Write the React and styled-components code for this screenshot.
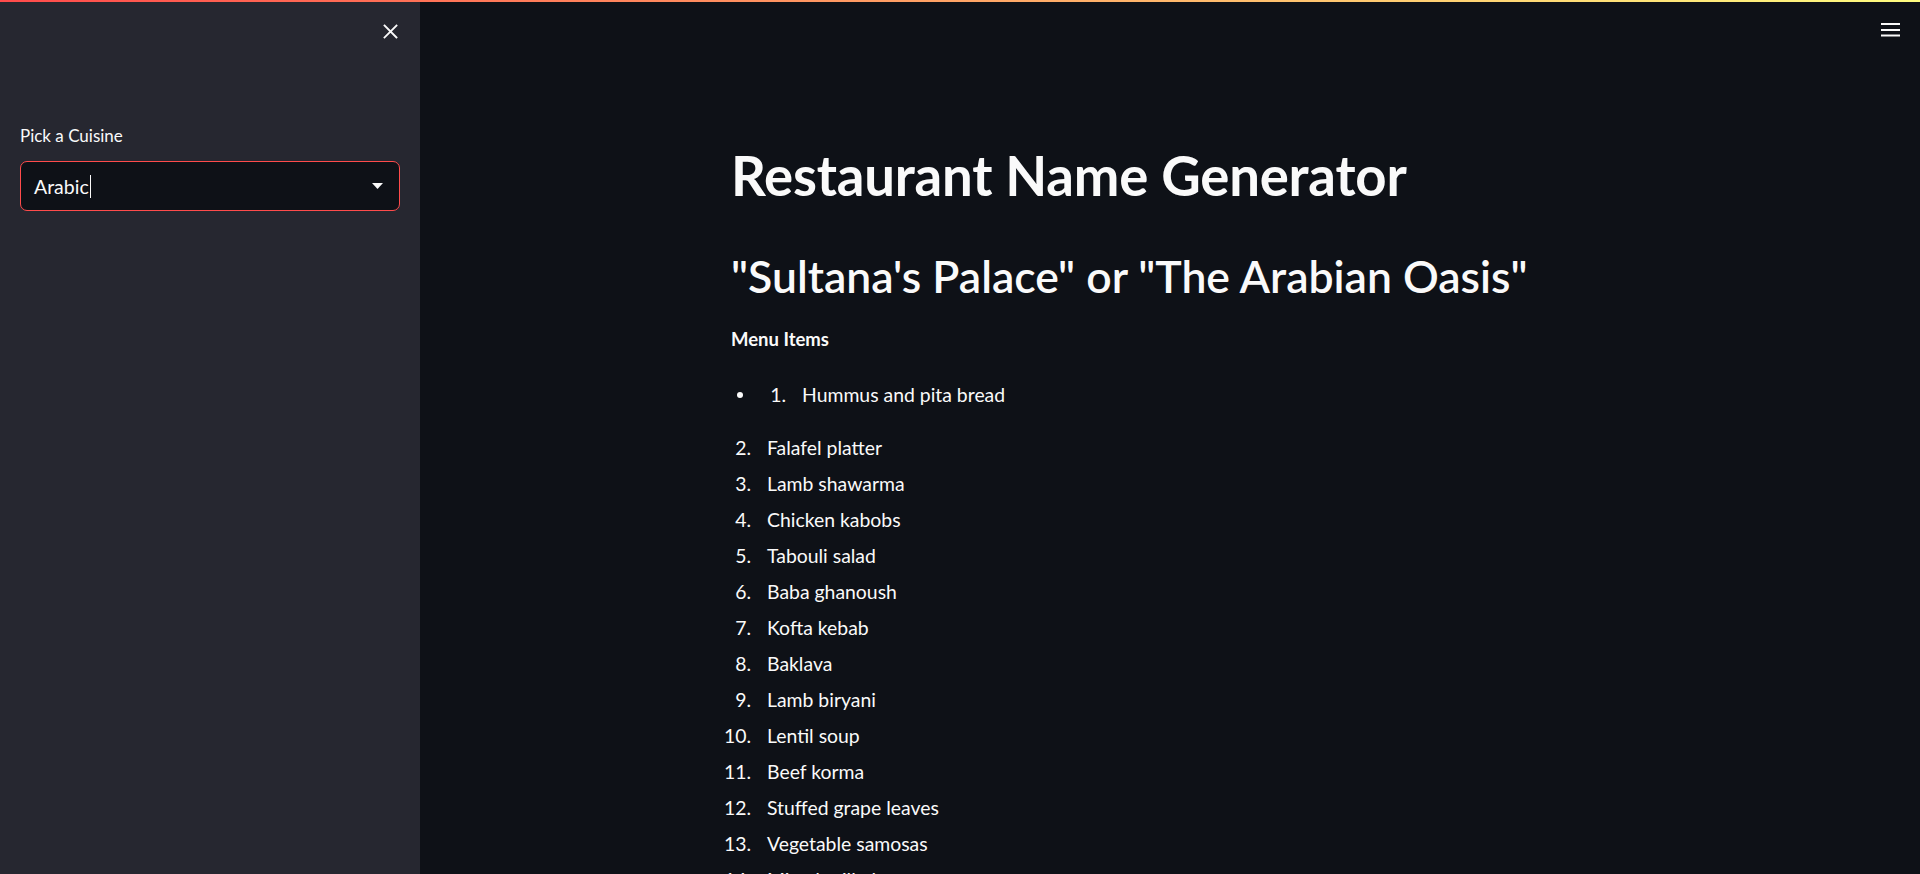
import React from 'react';
import styled, { createGlobalStyle } from 'styled-components';

const GlobalStyle = createGlobalStyle`
  html, body {
    margin: 0;
    padding: 0;
    background: #0e1117;
    font-family: "Lato", "Noto Sans", sans-serif;
    color: #fafafa;
  }
  * { box-sizing: border-box; }
`;

const menuItems = [
    'Falafel platter',
    'Lamb shawarma',
    'Chicken kabobs',
    'Tabouli salad',
    'Baba ghanoush',
    'Kofta kebab',
    'Baklava',
    'Lamb biryani',
    'Lentil soup',
    'Beef korma',
    'Stuffed grape leaves',
    'Vegetable samosas',
    'Mixed grill platter',
];

const Page = styled.div`
  display: flex;
  flex-direction: column;
  height: 874px;
  overflow: hidden;
`;

const Decoration = styled.div`
  height: 2px;
  flex-shrink: 0;
  background: linear-gradient(90deg, #ff4b4b, #fffd80);
`;

const Body = styled.div`
  display: flex;
  flex: 1;
  min-height: 0;
`;

const Sidebar = styled.aside`
  width: 420px;
  flex-shrink: 0;
  background: #262730;
  padding: 0 20px;
`;

const SidebarHeader = styled.div`
  height: 58px;
  display: flex;
  justify-content: flex-end;
  align-items: center;
  margin-right: -4px;
`;

const IconButton = styled.button`
  width: 28px;
  height: 28px;
  display: flex;
  align-items: center;
  justify-content: center;
  background: none;
  border: none;
  padding: 0;
  color: #fafafa;
  cursor: pointer;
`;

const Label = styled.label`
  display: block;
  margin-top: 62px;
  margin-bottom: 11px;
  font-size: 17px;
  line-height: 28px;
  color: #fafafa;
`;

const SelectBox = styled.div`
  height: 50px;
  display: flex;
  align-items: center;
  padding: 0 16px 0 13px;
  background: #0e1117;
  border: 1px solid #ff4b4b;
  border-radius: 7px;
`;

const SelectValue = styled.span`
  flex: 1;
  display: flex;
  align-items: center;
  font-size: 19.5px;
  color: #fafafa;
`;

const Caret = styled.span`
  display: inline-block;
  width: 1px;
  height: 23px;
  margin-left: 1px;
  background: #fafafa;
`;

const Main = styled.main`
  flex: 1;
  display: flex;
  flex-direction: column;
  background: #0e1117;
  min-width: 0;
`;

const TopBar = styled.div`
  height: 55px;
  display: flex;
  justify-content: flex-end;
  align-items: center;
  padding-right: 16px;
  flex-shrink: 0;
`;

const Content = styled.div`
  width: 878px;
  margin: 0 auto;
  padding-top: 86px;
`;

const Title = styled.h1`
  margin: 0;
  font-size: 54.5px;
  line-height: 1.2;
  font-weight: 700;
  letter-spacing: -0.2px;
`;

const Subtitle = styled.h2`
  margin: 41px 0 0;
  font-size: 44.5px;
  line-height: 1.2;
  font-weight: 600;
`;

const SectionLabel = styled.p`
  margin: 25px 0 0;
  font-size: 18.5px;
  line-height: 1.2;
  font-weight: 700;
`;

const List = styled.div`
  display: flex;
  flex-direction: column;
  margin: ${p => p.$top}px 0 0 -13px;
`;

const BulletRow = styled.div`
  display: flex;
  align-items: center;
`;

const BulletCell = styled.span`
  width: 35px;
  flex-shrink: 0;
  display: flex;
  align-items: center;
  padding-left: 19px;
  &::before {
    content: '';
    width: 6px;
    height: 6px;
    border-radius: 50%;
    background: #fafafa;
  }
`;

const ItemRow = styled.div`
  display: grid;
  grid-template-columns: 33px 1fr;
  column-gap: 16px;
  height: 36px;
  align-items: center;
  font-size: 19.4px;
  line-height: 36px;
`;

const ItemNumber = styled.span`
  text-align: right;
`;

const ItemText = styled.span`
  white-space: nowrap;
`;

const CloseIcon = () => (
    <svg width="15" height="15" viewBox="0 0 15 15" fill="none" stroke="#fafafa" strokeWidth="1.8" strokeLinecap="square">
        <path d="M1.5 1.5 L13.5 13.5 M13.5 1.5 L1.5 13.5" />
    </svg>
);

const MenuIcon = () => (
    <svg width="19" height="14" viewBox="0 0 19 14" fill="#fafafa">
        <rect x="0" y="0" width="19" height="2" />
        <rect x="0" y="6" width="19" height="2" />
        <rect x="0" y="11.5" width="19" height="2" />
    </svg>
);

const DropArrow = () => (
    <svg width="11" height="6" viewBox="0 0 11 6" fill="#fafafa">
        <path d="M0 0 L11 0 L5.5 6 Z" />
    </svg>
);

const App = () => {
    return (
        <Page>
            <GlobalStyle />
            <Decoration />
            <Body>
                <Sidebar>
                    <SidebarHeader>
                        <IconButton aria-label="Close sidebar"><CloseIcon /></IconButton>
                    </SidebarHeader>
                    <Label>Pick a Cuisine</Label>
                    <SelectBox>
                        <SelectValue>Arabic<Caret /></SelectValue>
                        <DropArrow />
                    </SelectBox>
                </Sidebar>
                <Main>
                    <TopBar>
                        <IconButton aria-label="Menu"><MenuIcon /></IconButton>
                    </TopBar>
                    <Content>
                        <Title>Restaurant Name Generator</Title>
                        <Subtitle>"Sultana's Palace" or "The Arabian Oasis"</Subtitle>
                        <SectionLabel>Menu Items</SectionLabel>
                        <List $top={27}>
                            <BulletRow>
                                <BulletCell />
                                <ItemRow>
                                    <ItemNumber>1.</ItemNumber>
                                    <ItemText>Hummus and pita bread</ItemText>
                                </ItemRow>
                            </BulletRow>
                        </List>
                        <List $top={17}>
                            {menuItems.map((item, i) => (
                                <ItemRow key={item}>
                                    <ItemNumber>{i + 2}.</ItemNumber>
                                    <ItemText>{item}</ItemText>
                                </ItemRow>
                            ))}
                        </List>
                    </Content>
                </Main>
            </Body>
        </Page>
    )
}

export default App;
